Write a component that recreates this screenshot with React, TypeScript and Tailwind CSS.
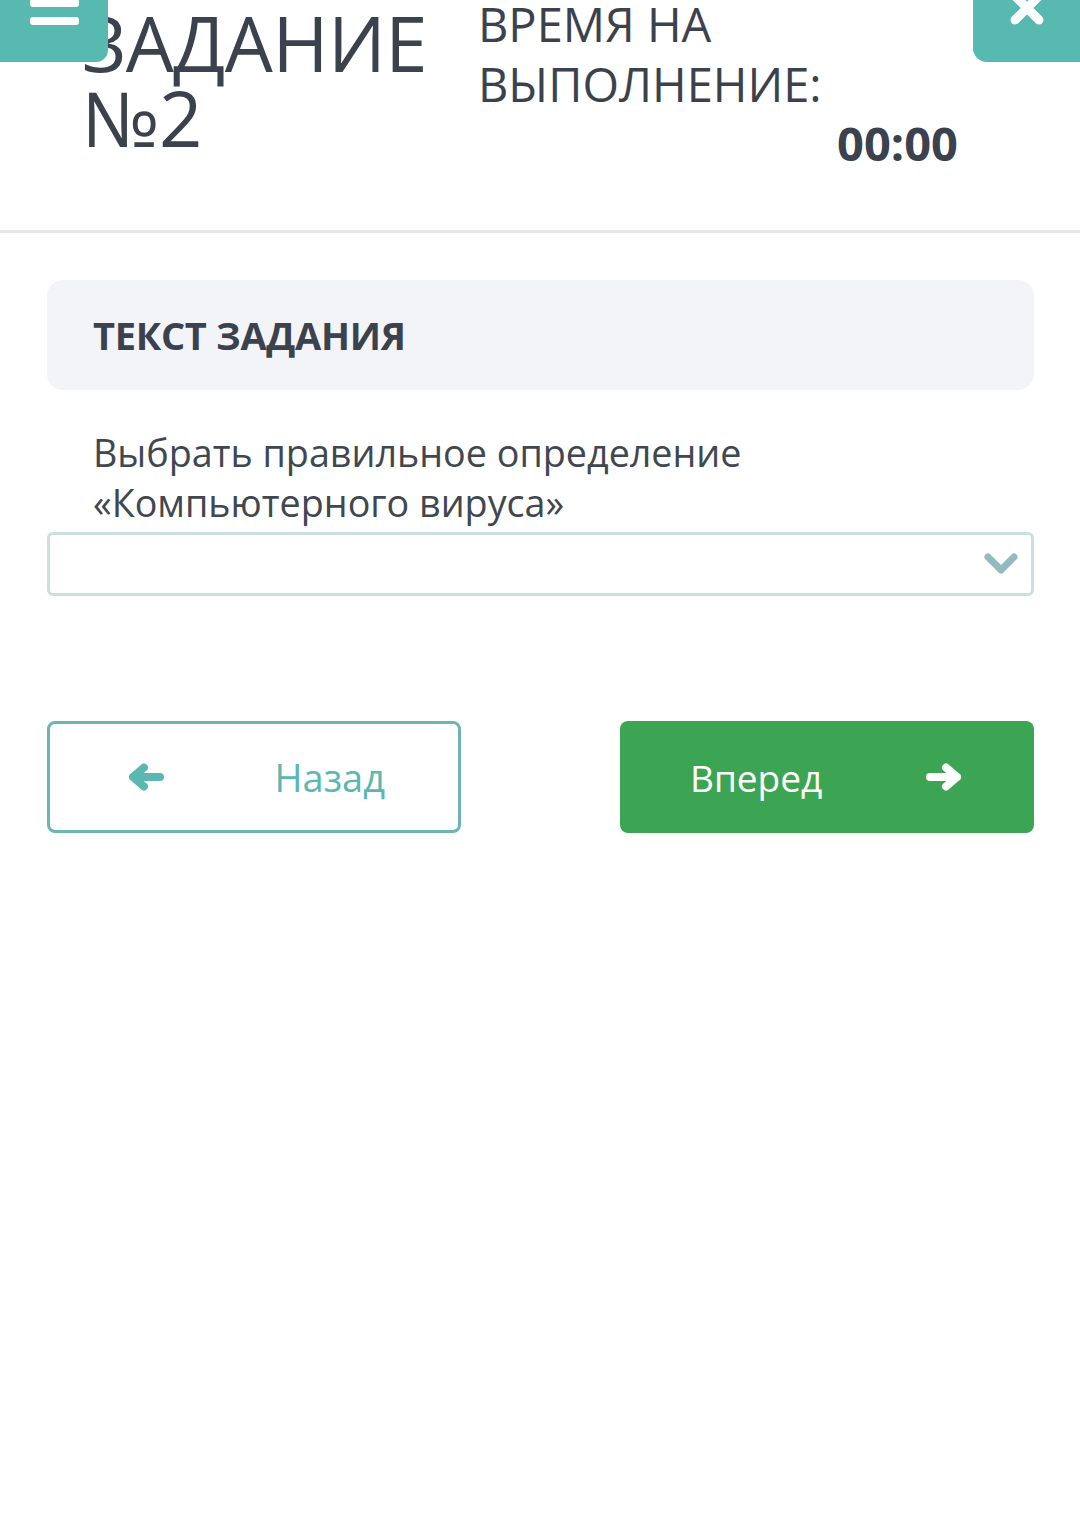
import React from 'react';

const Arrow: React.FC<{ dir: 'left' | 'right'; className?: string }> = ({ dir, className }) => (
    <svg
        viewBox="0 0 38 28"
        className={className}
        fill="none"
        stroke="currentColor"
        strokeWidth={8}
        strokeLinecap="round"
        strokeLinejoin="round"
        style={dir === 'left' ? { transform: 'scaleX(-1)' } : undefined}
    >
        <path d="M5 14H32M21 4.5L32 14L21 23.5" />
    </svg>
);

const App: React.FC = () => {
    return (
        <div className="relative w-full min-h-[1522px] bg-white text-[#3b424d] font-['Open_Sans',sans-serif] overflow-hidden">
            {/* top overlay buttons */}
            <button className="absolute left-0 top-0 w-[108px] h-[62px] bg-[#58b9b1] rounded-br-[12px] flex flex-col items-center">
                <span className="block w-[49px] h-[8px] bg-white rounded-[3px] -mt-[1px]" />
                <span className="block w-[49px] h-[8px] bg-white rounded-[3px] mt-[10px]" />
            </button>
            <button className="absolute right-0 top-0 w-[107px] h-[62px] bg-[#58b9b1] rounded-bl-[14px] flex justify-center">
                <svg viewBox="0 0 36 36" className="w-[36px] h-[36px] -mt-[10px]" stroke="white" strokeWidth={9} strokeLinecap="round">
                    <path d="M6 6L30 30M30 6L6 30" />
                </svg>
            </button>

            {/* header */}
            <header className="h-[233px] border-b-[3px] border-[#e6e7e8] flex items-start pl-[82px] pr-[122px]">
                <h1 className="w-[396px] mt-[5px] text-[76px] leading-[75px] font-normal tracking-[-0.5px]">
                    ЗАДАНИЕ №2
                </h1>
                <div className="flex-1 flex flex-col -mt-[6px]">
                    <div className="text-[47px] leading-[60px] font-normal">
                        ВРЕМЯ НА
                        <br />
                        ВЫПОЛНЕНИЕ:
                    </div>
                    <div className="text-right text-[47px] leading-[56px] font-bold mt-[1px]">00:00</div>
                </div>
            </header>

            <main className="pl-[47px] pr-[46px]">
                <div className="mt-[47px] h-[110px] rounded-[16px] bg-[#f3f4f8] flex items-center pl-[46px]">
                    <h2 className="text-[38px] font-bold leading-none tracking-[-0.3px]">ТЕКСТ ЗАДАНИЯ</h2>
                </div>

                <p className="mt-[38px] px-[46px] text-[37.7px] leading-[50px] text-[#40474f]">
                    Выбрать правильное определение
                    <br />
                    «Компьютерного вируса»
                </p>

                <div className="mt-[4px] h-[64px] rounded-[6px] border-[3px] border-[#cadfe0] flex items-center justify-end pr-[12px]">
                    <svg viewBox="0 0 36 24" className="w-[36px] h-[24px] text-[#92bac0]" fill="none" stroke="currentColor" strokeWidth={7} strokeLinecap="round" strokeLinejoin="round">
                        <path d="M5 5L18 18L31 5" />
                    </svg>
                </div>

                <div className="mt-[125px] grid grid-cols-2 gap-[159px]">
                    <button className="h-[112px] rounded-[8px] border-[3px] border-[#6db4b4] bg-white flex items-center justify-between pl-[77px] pr-[73px] text-[#5ab7b1]">
                        <Arrow dir="left" className="w-[38px] h-[28px]" />
                        <span className="text-[38px] leading-none">Назад</span>
                    </button>
                    <button className="h-[112px] rounded-[8px] bg-[#3ca553] flex items-center justify-between pl-[70px] pr-[71px] text-white">
                        <span className="text-[37px] leading-none">Вперед</span>
                        <Arrow dir="right" className="w-[38px] h-[28px]" />
                    </button>
                </div>
            </main>
        </div>
    );
};

export default App;
